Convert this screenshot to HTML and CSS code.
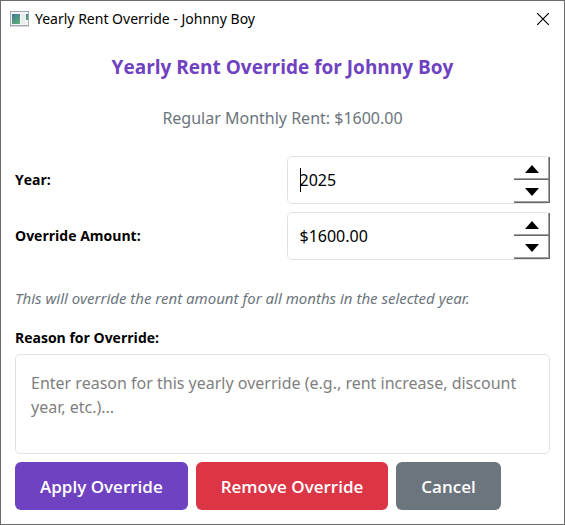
FILE: index.html
```html
<!DOCTYPE html>
<html lang="en">
<head>
<meta charset="utf-8">
<meta name="viewport" content="width=device-width, initial-scale=1">
<title>Yearly Rent Override - Johnny Boy</title>
<link rel="stylesheet" href="styles.css">
</head>
<body>
<main class="window">
  <header class="titlebar">
    <svg class="app-icon" width="19" height="16" viewBox="0 0 19 16" aria-hidden="true">
      <defs>
        <linearGradient id="pane" x1="0" y1="0" x2="0.6" y2="1">
          <stop offset="0" stop-color="#42759a"/>
          <stop offset="1" stop-color="#5bab74"/>
        </linearGradient>
      </defs>
      <rect x="0.5" y="0.5" width="18" height="14" fill="#f4f5f6" stroke="#a3a9af"/>
      <path d="M0 15.5h19" stroke="#d5d7d9"/>
      <rect x="2" y="3" width="8" height="10" fill="url(#pane)"/>
      <rect x="11" y="3" width="4" height="10" fill="#e9ebed"/>
      <rect x="16" y="3" width="2" height="6" fill="url(#pane)"/>
    </svg>
    <span class="caption">Yearly Rent Override - Johnny Boy</span>
    <button class="close" type="button" aria-label="Close">
      <svg width="12" height="12" viewBox="0 0 12 12" aria-hidden="true"><path d="M0 0l12 12M12 0L0 12" stroke="#000" stroke-width="1.2"/></svg>
    </button>
  </header>
  <form class="content">
    <h1 class="heading">Yearly Rent Override for Johnny Boy</h1>
    <p class="regular">Regular Monthly Rent: $1600.00</p>
    <div class="fields">
      <label class="label" for="year">Year:</label>
      <div class="spin focused">
        <input class="value" id="year" type="text" value="2025">
        <div class="steps">
          <button class="step" type="button" aria-label="Increase year"><svg width="14" height="8" viewBox="0 0 14 8"><path d="M7 0l7 8H0z"/></svg></button>
          <button class="step" type="button" aria-label="Decrease year"><svg width="14" height="8" viewBox="0 0 14 8"><path d="M0 0h14L7 8z"/></svg></button>
        </div>
      </div>
      <label class="label" for="amount">Override Amount:</label>
      <div class="spin">
        <input class="value" id="amount" type="text" value="$1600.00">
        <div class="steps">
          <button class="step" type="button" aria-label="Increase amount"><svg width="14" height="8" viewBox="0 0 14 8"><path d="M7 0l7 8H0z"/></svg></button>
          <button class="step" type="button" aria-label="Decrease amount"><svg width="14" height="8" viewBox="0 0 14 8"><path d="M0 0h14L7 8z"/></svg></button>
        </div>
      </div>
    </div>
    <p class="note">This will override the rent amount for all months in the selected year.</p>
    <label class="label" for="reason">Reason for Override:</label>
    <textarea class="reason" id="reason" placeholder="Enter reason for this yearly override (e.g., rent increase, discount year, etc.)..."></textarea>
    <div class="actions">
      <button class="action apply" type="button">Apply Override</button>
      <button class="action remove" type="button">Remove Override</button>
      <button class="action cancel" type="button">Cancel</button>
    </div>
  </form>
</main>
</body>
</html>
```
FILE: styles.css
```css
* { box-sizing: border-box; }

body {
  margin: 0;
  background: #fff;
  color: #000;
  font-family: "Noto Sans", "Open Sans", sans-serif;
}

button, input, textarea { font-family: inherit; }

.window {
  min-height: 100vh;
  border: 1px solid #6b6b6b;
}

.titlebar {
  display: flex;
  align-items: center;
  height: 36px;
  padding: 0 9px;
  gap: 6px;
}

.caption { flex: 1; font-size: 14px; line-height: 20px; }

.close {
  display: flex;
  padding: 6px;
  border: 0;
  background: none;
}

.content {
  display: flex;
  flex-direction: column;
  padding: 16px 14px 14px;
}

.heading,
.label,
.action { font-family: "Open Sans", "Noto Sans", sans-serif; }

.heading {
  margin: 0 0 24px;
  color: #6f42c1;
  font-size: 19px;
  font-weight: 700;
  line-height: 28px;
  text-align: center;
}

.regular {
  margin: 0 0 24px;
  color: #6c757d;
  font-size: 16px;
  line-height: 27px;
  text-align: center;
}

.fields {
  display: grid;
  grid-template-columns: 1fr 1fr;
  align-items: center;
  gap: 8px;
}

.label { font-size: 14px; font-weight: 700; line-height: 20px; }

.spin {
  position: relative;
  display: flex;
  min-width: 0;
  height: 48px;
  border: 1px solid #dee2e6;
  border-radius: 5px;
}

.focused::before {
  content: "";
  position: absolute;
  top: 11px;
  left: 12px;
  width: 1px;
  height: 24px;
  background: #000;
}

.value {
  flex: 1;
  min-width: 0;
  padding: 0 0 0 12px;
  border: 0;
  background: none;
  color: #000;
  font-size: 16px;
}

.steps {
  display: flex;
  flex-direction: column;
  width: 36px;
  height: 46px;
  margin-right: -1px;
}

.step {
  display: flex;
  flex: 1;
  align-items: center;
  justify-content: center;
  padding: 0;
  border: 0;
  background: #fff;
  box-shadow: inset -1px -1px #696969, inset -2px -2px #a0a0a0;
}

.note {
  margin: 28px 0 20px;
  color: #6c757d;
  font-size: 15px;
  font-style: italic;
  line-height: 20px;
}

.reason {
  height: 100px;
  margin: 6px 0 8px;
  padding: 16px 15px;
  border: 1px solid #dee2e6;
  border-radius: 5px;
  font-size: 16px;
  line-height: 24px;
  resize: none;
}

.reason::placeholder { color: #808080; }

.actions { display: flex; gap: 8px; }

.action {
  height: 48px;
  padding: 0 25px;
  border: 0;
  border-radius: 6px;
  color: #fff;
  font-size: 17px;
  font-weight: 600;
  white-space: nowrap;
}

.apply { background: #6f42c1; }
.remove { background: #dc3545; }
.cancel { background: #6c757d; }
```
